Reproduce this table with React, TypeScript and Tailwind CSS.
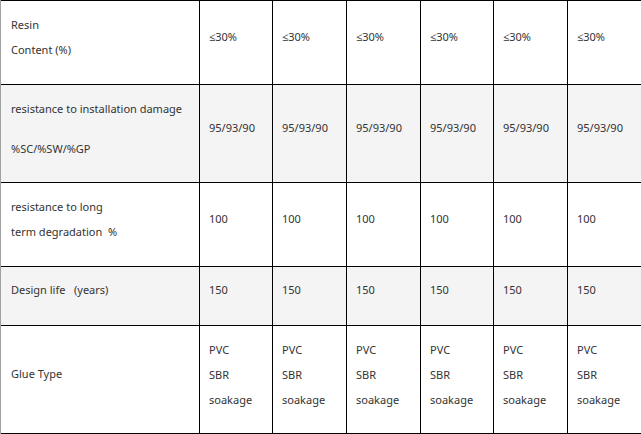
import React from "react";

const cols = ["w-[199px]", "w-[73px]", "w-[74px]", "w-[74px]", "w-[73px]", "w-[74px]", "w-[73px]"];

type Row = { h: string; bg: string; label: React.ReactNode; value: React.ReactNode };

const rows: Row[] = [
  {
    h: "h-[84px]",
    bg: "bg-white",
    label: (
      <div className="flex flex-col leading-[25px]">
        <span>Resin</span>
        <span>Content (%)</span>
      </div>
    ),
    value: <span>≤30%</span>,
  },
  {
    h: "h-[98px]",
    bg: "bg-[#f4f4f4]",
    label: (
      <div className="flex flex-col gap-[15px] leading-[25px]">
        <span>resistance to installation damage</span>
        <span>%SC/%SW/%GP</span>
      </div>
    ),
    value: <span>95/93/90</span>,
  },
  {
    h: "h-[84px]",
    bg: "bg-white",
    label: (
      <div className="flex flex-col leading-[25px]">
        <span>resistance to long</span>
        <span className="whitespace-pre">term degradation  %</span>
      </div>
    ),
    value: <span>100</span>,
  },
  {
    h: "h-[59px]",
    bg: "bg-[#f4f4f4]",
    label: <span className="whitespace-pre">Design life   (years)</span>,
    value: <span>150</span>,
  },
  {
    h: "h-[108px]",
    bg: "bg-white",
    label: <span>Glue Type</span>,
    value: (
      <div className="flex flex-col leading-[25px]">
        <span>PVC</span>
        <span>SBR</span>
        <span>soakage</span>
      </div>
    ),
  },
];

export default function App() {
  return (
    <div
      className="w-[641px] h-[434px] overflow-hidden bg-white border-l border-[#a0a0a0] text-[11px] text-[#333333]"
      style={{ fontFamily: '"Noto Sans", "Open Sans", sans-serif' }}
    >
      <div className="flex flex-col border-t border-black">
        {rows.map((r, ri) => (
          <div key={ri} className={`flex ${r.h} ${r.bg} border-b border-black shrink-0`}>
            {cols.map((c, ci) => (
              <div
                key={ci}
                className={`${c} shrink-0 flex items-center pb-[11px] ${ci === 0 ? "pl-[10px]" : "pl-[9px]"} ${
                  ci < 6 ? "border-r border-black" : ""
                }`}
              >
                {ci === 0 ? r.label : r.value}
              </div>
            ))}
          </div>
        ))}
      </div>
    </div>
  );
}
